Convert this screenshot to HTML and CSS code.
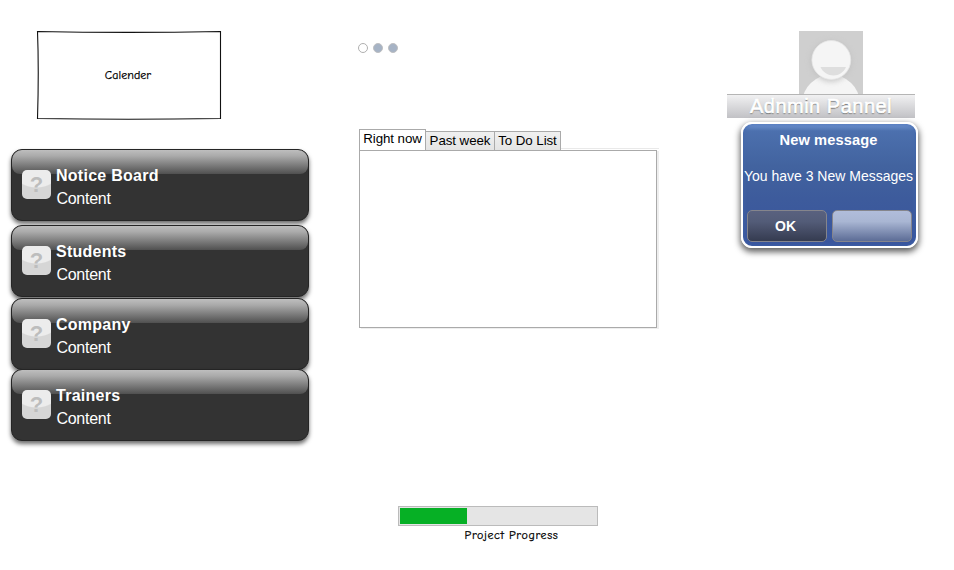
FILE: index.html
```
<!DOCTYPE html>
<html lang="en">
<head>
<meta charset="utf-8">
<title>Admin Panel</title>
<link rel="stylesheet" href="styles.css">
</head>
<body>
<main class="page">
  <section class="left">
    <div class="calendar">
      <svg class="sketch" width="186" height="90" viewBox="0 0 186 90"><path d="M1.5 1.5Q92 3.3 184.5 1.5V88.5Q92 90 1.5 88.5Q3 40 1.5 1.5Z" fill="#fff" stroke="#111" stroke-width="1.1"/></svg>
      <span class="hand calendar-label">Calender</span>
    </div>
    <div class="cards">
      <article class="card"><span class="icon"><b>?</b></span><div><h2>Notice Board</h2><p>Content</p></div></article>
      <article class="card second"><span class="icon"><b>?</b></span><div><h2>Students</h2><p>Content</p></div></article>
      <article class="card third"><span class="icon"><b>?</b></span><div><h2>Company</h2><p>Content</p></div></article>
      <article class="card fourth"><span class="icon"><b>?</b></span><div><h2>Trainers</h2><p>Content</p></div></article>
    </div>
  </section>
  <section class="middle">
    <div class="dots"><i class="dot open"></i><i class="dot"></i><i class="dot"></i></div>
    <div class="tabs">
      <nav class="tabbar"><a class="tab active"><span>Right now</span></a><a class="tab"><span>Past week</span></a><a class="tab"><span>To Do List</span></a></nav>
      <div class="panel"></div>
    </div>
    <div class="progress"><div class="bar"><div class="fill"></div></div><span class="hand progress-label">Project Progress</span></div>
  </section>
  <section class="right">
    <svg class="avatar" width="64" height="63" viewBox="0 0 64 63">
      <defs>
        <filter id="soft" x="-30%" y="-30%" width="160%" height="160%"><feGaussianBlur stdDeviation="2.5"/></filter>
        <clipPath id="body"><ellipse cx="32" cy="71" rx="28.500" ry="27"/></clipPath>
      </defs>
      <rect width="64" height="63" fill="#cfcfcf"/>
      <circle cx="32" cy="30" r="21" fill="#bbb" opacity=".5" filter="url(#soft)"/>
      <ellipse cx="32" cy="71" rx="28.500" ry="27" fill="#f5f5f5"/>
      <g clip-path="url(#body)"><circle cx="32" cy="31" r="20" fill="#bbb" opacity=".7" filter="url(#soft)"/></g>
      <circle cx="32.300" cy="29" r="19.400" fill="#f5f5f5" stroke="#e6e6e6" stroke-width=".8"/>
      <path d="M21.500 36H47C44.500 41.500 40 44.500 34.500 44.500C29 44.500 24 41.500 21.500 36Z" fill="#dedede"/>
    </svg>
    <h1 class="title"><span>Adnmin Pannel</span></h1>
    <div class="dialog">
      <h3><span>New message</span></h3>
      <p><span>You have 3 New Messages</span></p>
      <div class="buttons"><button class="ok">OK</button><button class="blank" aria-label="Cancel"></button></div>
    </div>
  </section>
</main>
</body>
</html>
```
FILE: styles.css
```
* { box-sizing: border-box; }
body { margin: 0; background: #fff; font-family: "Liberation Sans", Arial, sans-serif; }
h1, h2, h3, p { margin: 0; font-weight: normal; white-space: nowrap; }
.page { display: grid; grid-template-columns: 298px 300px 192px; width: 954px; height: 570px; padding-left: 11px; overflow: hidden; }
.hand { font-family: "Comic Sans MS", "Comic Neue", "Open Sans", sans-serif; font-size: 12px; color: #000; white-space: nowrap; -webkit-text-stroke: .25px #000; }

.calendar { display: grid; place-items: center; width: 186px; height: 90px; margin: 30px 0 0 25px; }
.sketch, .calendar-label { grid-area: 1 / 1; }
.calendar-label { margin-left: -2px; letter-spacing: .05px; }
.cards { margin-top: 29px; }
.card { position: relative; display: flex; width: 298px; height: 72px; padding: 21px 0 0 10px; border: 1px solid #252525; border-radius: 11px; color: #fff; background: #333; box-shadow: 0 3px 4px rgba(0,0,0,.58); }
.card::before { content: ""; position: absolute; inset: 0 0 auto 0; height: 24px; border-radius: 10px 10px 8px 8px; background: linear-gradient(#bebebe, #aaa 25%, #505050); }
.card > * { position: relative; }
.second { margin-top: 4px; }
.third { margin-top: 1px; }
.fourth { margin-top: -1px; }
.icon { display: grid; place-items: center; width: 29px; height: 29px; margin: -1px 5px 0 0; border-radius: 5px; background: radial-gradient(ellipse 24px 18px at 50% 0, #ececec 94%, #d6d6d6 100%); }
.icon b { color: #bdbdbd; font-size: 22px; line-height: 28px; }
.card h2 { font-size: 16px; line-height: 18px; font-weight: bold; margin-top: -4px; letter-spacing: .26px; }
.card p { font-size: 16px; line-height: 18px; margin-top: 5px; letter-spacing: -.25px; padding-left: .4px; }

.middle { padding-left: 50px; width: 349px; }
.dots { display: flex; gap: 5px; height: 10px; margin-top: 43px; margin-left: -1px; }
.dot { width: 10px; height: 10px; border: 1px solid #bfc0c2; border-radius: 50%; background: #a6b3c5; }
.dot.open { background: #fff; border-color: #b0b0b0; }
.tabs { width: 300px; margin-top: 76px; }
.tabbar { display: flex; align-items: flex-end; height: 21px; font-size: 13.33px; letter-spacing: -.08px; color: #000; background: linear-gradient(#e9e9e9, #e9e9e9) 0 19px / 100% 1px no-repeat; }
.tab { display: flex; justify-content: center; width: 70px; height: 19px; border: 1px solid #aaa; border-bottom: 0; line-height: 18px; background: linear-gradient(#f0f0f0, #e4e4e4); white-space: nowrap; }
.tab.active { width: 67px; height: 21px; background: #fff; line-height: 18px; }
.tab + .tab { margin-left: -1px; }
.tab:last-child { width: 67px; }
.panel { width: 298px; height: 178px; border: 1px solid #aaa; box-shadow: 2px 1px 0 #eee; }
.progress { width: 200px; margin: 178px 0 0 39px; display: flex; flex-direction: column; align-items: center; }
.bar { width: 200px; height: 20px; padding: 1px; border: 1px solid #bbb; background: #e5e5e5; }
.fill { width: 67px; height: 16px; background: #06b025; }
.progress-label { margin: 1px 0 0 27px; line-height: 16px; letter-spacing: .6px; }

.right { width: 192px; margin-left: 118px; padding-top: 31px; }
.avatar { display: block; margin-left: 72px; }
.title { display: flex; justify-content: center; width: 188px; height: 24px; border-top: 1px solid #b5b5b5; background: linear-gradient(#f1f1f2, #c1c1c5); color: #fff; font-size: 20px; line-height: 22px; text-shadow: 0 1px 1px #555; -webkit-text-stroke: .7px #fff; letter-spacing: .5px; }
.dialog { width: 177px; height: 126px; margin: 4px 0 0 14px; padding: 0 2px 0 4px; border: 2px solid #fff; border-radius: 11px; color: #fff; text-align: center; background: linear-gradient(#7298d4, #4c70ae 7px, #42639f 42px, #3d5b9c 75px, #39559d); box-shadow: 0 3px 6px 1px rgba(0,0,0,.62), inset 0 0 4px #4065ad; }
.dialog h3 { font-size: 14.67px; font-weight: bold; line-height: 18px; margin: 7px 4px 0 0; letter-spacing: .1px; }
.dialog p { font-size: 14px; line-height: 18px; margin: 18px 4px 0 0; display: flex; justify-content: center; }
.buttons { display: flex; gap: 5px; margin-top: 25px; }
.buttons button { width: 80px; height: 32px; padding: 0 3px 0 0; border: 1px solid #85858c; border-radius: 5px; color: #fff; font: bold 14px "Liberation Sans", sans-serif; }
.buttons .ok { background: linear-gradient(#59617f, #535c78 35%, #353b50); }
.buttons .blank { background: linear-gradient(#b1bddb, #a9b6d3 35%, #5c6c96); }
```
